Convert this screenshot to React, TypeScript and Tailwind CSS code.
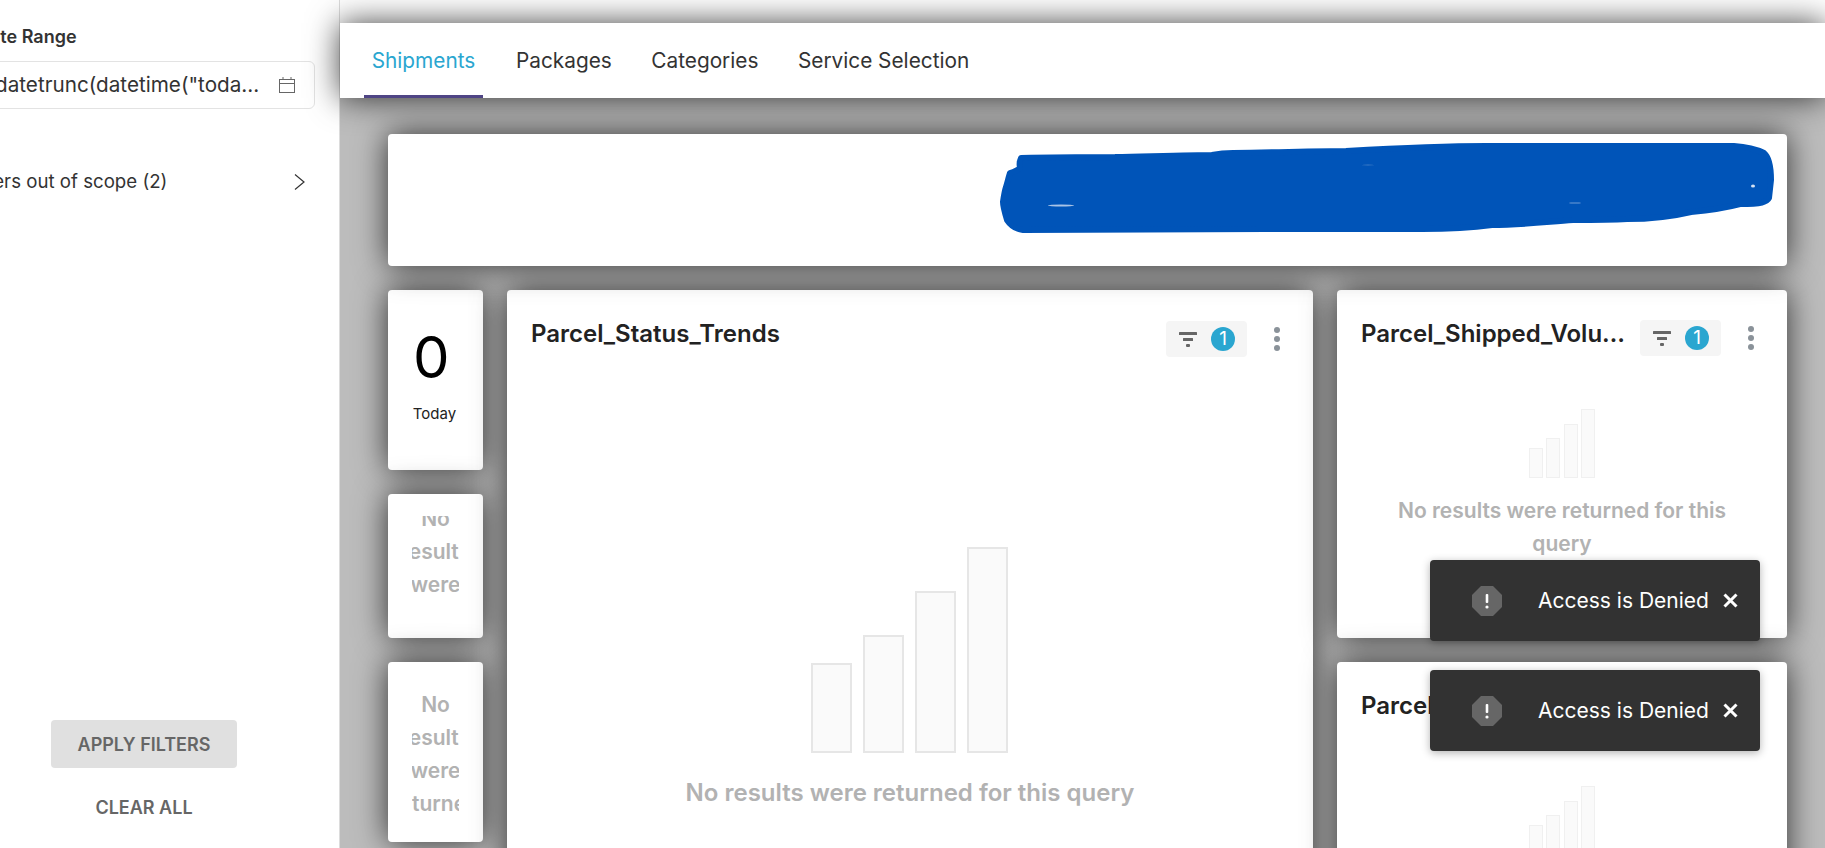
import { ReactNode } from 'react';

const emptyText = 'No results were returned for this query';

function FilterChip() {
  return (
    <div className="flex h-[36px] w-[81px] shrink-0 items-center gap-[13px] rounded bg-[#f5f5f5] pl-[13px]">
      <svg width="18" height="15" viewBox="0 0 18 15" className="text-[#666666]" fill="currentColor">
        <rect x="0" y="0" width="18" height="3" rx="0.5" />
        <rect x="4" y="6" width="10" height="3" rx="0.5" />
        <rect x="7" y="12" width="4" height="3" rx="1" />
      </svg>
      <span className="ml-[1px] flex h-[24px] w-[24px] items-center justify-center rounded-full bg-[#2aa6d0] text-[19px] text-white">
        1
      </span>
    </div>
  );
}

function MoreDots() {
  return (
    <div className="mt-[6px] ml-[27px] flex w-[6px] shrink-0 flex-col gap-[3px]">
      <span className="h-[6px] w-[6px] rounded-full bg-[#8a9299]" />
      <span className="h-[6px] w-[6px] rounded-full bg-[#8a9299]" />
      <span className="h-[6px] w-[6px] rounded-full bg-[#8a9299]" />
    </div>
  );
}

function EmptyBars({ large }: { large?: boolean }) {
  if (large) {
    return (
      <svg width="197" height="206" viewBox="0 0 197 206" fill="#fafafa" stroke="#e6e6e6" strokeWidth="2">
        <rect x="1" y="117" width="39" height="88" />
        <rect x="53" y="89" width="39" height="116" />
        <rect x="105" y="45" width="39" height="160" />
        <rect x="157" y="1" width="39" height="204" />
      </svg>
    );
  }
  return (
    <svg width="66" height="69" viewBox="0 0 66 69" fill="#fafafa" stroke="#f0f0f0" strokeWidth="1">
      <rect x="0.5" y="39.5" width="13" height="29" />
      <rect x="17.5" y="29.5" width="13" height="39" />
      <rect x="35.5" y="15.5" width="13" height="53" />
      <rect x="52.5" y="0.5" width="13" height="68" />
    </svg>
  );
}

function Card({ className, children }: { className: string; children: ReactNode }) {
  return (
    <div className={`overflow-hidden rounded bg-white shadow-[0_0_32px_rgba(0,0,0,0.75)] ${className}`}>{children}</div>
  );
}

function ClippedEmpty({ className }: { className: string }) {
  return (
    <div className={`mx-auto flex w-[47px] flex-col items-center overflow-hidden ${className}`}>
      <div className="flex w-[47px] flex-col items-center text-[21px] leading-[33px] font-semibold text-[#b2b2b2]">
        {emptyText.split(' ').map((word, i) => (
          <span key={i} className="whitespace-nowrap">
            {word}
          </span>
        ))}
      </div>
    </div>
  );
}

function Toast() {
  return (
    <div className="flex h-[81px] w-[330px] items-center rounded bg-[#323232] pl-[42px] shadow-[0_2px_8px_rgba(0,0,0,0.3)]">
      <svg width="30" height="30" viewBox="0 0 30 30">
        <polygon points="9,0 21,0 30,9 30,21 21,30 9,30 0,21 0,9" fill="#666666" />
        <rect x="13.7" y="8" width="2.6" height="9" rx="1" fill="#ffffff" />
        <circle cx="15" cy="21" r="1.6" fill="#ffffff" />
      </svg>
      <span className="ml-[36px] w-[169px] text-[21px] whitespace-nowrap text-white">Access is Denied</span>
      <svg width="15" height="15" viewBox="0 0 15 15" className="ml-[16px]" stroke="#ffffff" strokeWidth="3">
        <path d="M1.5 1.5 13.5 13.5M13.5 1.5 1.5 13.5" />
      </svg>
    </div>
  );
}

function Sidebar() {
  return (
    <aside className="flex h-full w-[340px] shrink-0 flex-col overflow-hidden border-r border-[#dcdcdc] bg-white">
      <div className="pt-[26px] pr-[24px]">
        <div className="-ml-[23px] text-[18px] leading-[22px] font-semibold whitespace-nowrap text-[#333333]">
          Date Range
        </div>
        <div className="-ml-[40px] mt-[13px] flex h-[48px] items-center justify-between rounded-md border border-[#e3e3e3] pr-[19px] pl-[34px]">
          <span className="text-[20.7px] whitespace-nowrap text-[#333333]">datetrunc(datetime("toda...</span>
          <svg width="16" height="16" viewBox="0 0 16 16" fill="none" stroke="#666666" strokeWidth="1">
            <rect x="0.5" y="2.5" width="15" height="13" />
            <path d="M0.5 6.5H15.5M4 0V3M12 0V3" />
          </svg>
        </div>
      </div>
      <div className="-ml-[33px] mt-[59px] flex items-center justify-between pr-[34px]">
        <span className="text-[18.67px] whitespace-nowrap text-[#333333]">Filters out of scope (2)</span>
        <svg width="11" height="16" viewBox="0 0 11 16" fill="none" stroke="#333333" strokeWidth="1.2">
          <path d="M1 0.5 10 8 1 15.5" />
        </svg>
      </div>
      <div className="mt-auto flex flex-col items-center pr-[51px] pb-[29px]">
        <div className="flex h-[48px] w-[186px] items-center justify-center rounded bg-[#e0e0e0] text-[18px] font-semibold text-[#666666]">
          APPLY FILTERS
        </div>
        <div className="mt-[29px] text-[18px] leading-[22px] font-semibold text-[#666666]">CLEAR ALL</div>
      </div>
    </aside>
  );
}

export default function App() {
  return (
    <div className="flex h-screen w-full overflow-hidden bg-white [font-family:Inter,sans-serif]">
      <Sidebar />
      <main className="relative flex h-full min-w-0 flex-1 flex-col pt-[23px]">
        <nav className="relative z-10 flex h-[75px] shrink-0 items-start gap-[39.5px] bg-white pl-[24px] shadow-[0_0_32px_rgba(0,0,0,0.75)]">
          <div className="flex h-[75px] w-[119px] justify-center border-b-[3px] border-[#4f4585] pt-[26px] text-[20.8px] leading-[24px] text-[#2aa6d0]">
            Shipments
          </div>
          <div className="-ml-[6.5px] pt-[26px] text-[20.8px] leading-[24px] text-[#333333]">Packages</div>
          <div className="pt-[26px] text-[20.8px] leading-[24px] text-[#333333]">Categories</div>
          <div className="pt-[26px] text-[20.8px] leading-[24px] text-[#333333]">Service Selection</div>
        </nav>
        <div className="flex min-h-0 flex-1 flex-col gap-[24px] overflow-hidden bg-[#bcbcbc] pt-[36px] pr-[38px] pl-[48px]">
          <Card className="relative h-[132px] shrink-0">
            <svg
              width="780"
              height="96"
              viewBox="1000 140 780 96"
              className="absolute top-[6px] left-[612px]"
              fill="#0054b8"
              stroke="#0054b8"
              strokeWidth="6"
              strokeLinejoin="round"
            >
              <path d="M1021 158C1060 157 1090 157 1115 157 1160 156 1195 155 1212 155 1222 153 1228 153 1233 153 1290 152 1320 151 1346 151 1400 148 1450 146 1486 146L1734 146C1750 147 1758 150 1764 153 1770 158 1771 170 1771 180L1769 198C1767 202 1762 204 1740 204 1725 208 1712 210 1691 212 1670 217 1645 219 1627 219 1610 220 1590 220 1573 220 1545 222 1520 225 1492 225 1470 228 1445 229 1422 229 1370 229 1320 229 1266 229L1023 230C1015 229 1011 226 1007 220 1004 210 1003 205 1003 202 1004 195 1005 190 1006 187 1008 180 1009 176 1010 173 1013 172 1018 170 1020 168 1019 163 1020 160 1021 158Z" />
              <g stroke="none">
                <ellipse cx="1061" cy="205.5" rx="13" ry="0.9" fill="#a8c3e6" />
                <ellipse cx="1368" cy="165" rx="6" ry="0.5" fill="#3f7cc6" />
                <ellipse cx="1575" cy="203" rx="6" ry="0.6" fill="#6f9bd5" />
                <ellipse cx="1753" cy="186" rx="2" ry="1.5" fill="#d5e2f3" />
              </g>
            </svg>
          </Card>
          <div className="grid min-h-0 flex-1 grid-cols-[95px_806px_450px] gap-[24px]">
            <div className="flex flex-col gap-[24px]">
              <Card className="flex h-[180px] shrink-0 flex-col">
                <div className="pt-[32px] pl-[25px] text-[58px] leading-[70px] text-black">0</div>
                <div className="mt-[12px] pr-[2px] text-center text-[15px] leading-[20px] text-[#222222]">Today</div>
              </Card>
              <Card className="h-[144px] shrink-0 pt-[22px]">
                <ClippedEmpty className="h-[85px] [&>div]:-mt-[14px]" />
              </Card>
              <Card className="h-[180px] shrink-0 pt-[24px]">
                <ClippedEmpty className="h-[134px] [&>div]:mt-[2px]" />
              </Card>
            </div>
            <Card className="h-[700px] px-[24px] pt-[30px]">
              <div className="flex items-start">
                <h2 className="flex-1 text-[24px] leading-[28px] font-semibold text-[#222222]">Parcel_Status_Trends</h2>
                <div className="mt-[1px] flex items-start">
                  <FilterChip />
                  <MoreDots />
                </div>
                <span className="w-[9px]" />
              </div>
              <div className="mt-[190px] flex flex-col items-center pr-[2px]">
                <EmptyBars large />
                <div className="mt-[24px] pl-[2px] text-[24px] leading-[32px] font-semibold text-[#b2b2b2]">
                  {emptyText}
                </div>
              </div>
            </Card>
            <div className="flex flex-col gap-[24px]">
              <Card className="h-[348px] shrink-0 px-[24px] pt-[30px]">
                <div className="flex items-start">
                  <h2 className="mr-[9px] w-[270px] truncate text-[24px] leading-[28px] font-semibold text-[#222222]">
                    Parcel_Shipped_Volume
                  </h2>
                  <div className="flex items-start">
                    <FilterChip />
                    <MoreDots />
                  </div>
                </div>
                <div className="mt-[53px] flex flex-col items-center">
                  <EmptyBars />
                  <div className="mt-[16px] text-center text-[21px] leading-[33px] font-semibold text-[#b2b2b2]">
                    No results were returned for this
                    <br />
                    query
                  </div>
                </div>
              </Card>
              <Card className="h-[348px] shrink-0 px-[24px] pt-[30px]">
                <h2 className="text-[24px] leading-[28px] font-semibold text-[#222222]">Parcel_Shipped_Weight</h2>
                <div className="mt-[66px] flex flex-col items-center">
                  <EmptyBars />
                </div>
              </Card>
            </div>
          </div>
        </div>
        <div className="absolute top-[560px] right-[65px] z-20 flex flex-col gap-[29px]">
          <Toast />
          <Toast />
        </div>
      </main>
    </div>
  );
}
